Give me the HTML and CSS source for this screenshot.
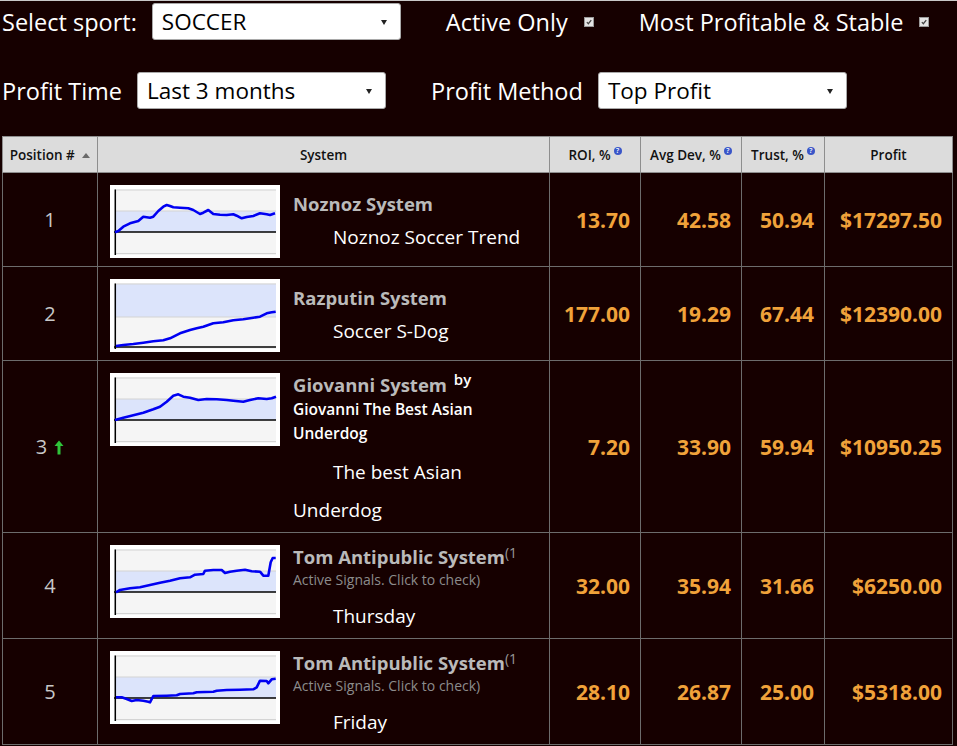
FILE: index.html
```html
<!DOCTYPE html>
<html lang="en">
<head>
  <meta charset="UTF-8">
  <title>Systems Ranking</title>
  <link rel="stylesheet" href="styles.css">
</head>
<body>
  <div class="filters">
    <div class="filter-row">
      <div class="filter-group">
        <span class="filter-label">Select sport:</span>
        <div class="select" style="width: 249px"><span>SOCCER</span></div>
      </div>
      <div class="filter-group">
        <span class="filter-label">Active Only</span>
        <span class="tick"><svg viewBox="0 0 10 10" width="10" height="10"><path d="M2.3 5.2 L4.2 7.2 L7.8 2.6" fill="none" stroke="#444" stroke-width="1.6"/></svg></span>
      </div>
      <div class="filter-group">
        <span class="filter-label">Most Profitable &amp; Stable</span>
        <span class="tick"><svg viewBox="0 0 10 10" width="10" height="10"><path d="M2.3 5.2 L4.2 7.2 L7.8 2.6" fill="none" stroke="#444" stroke-width="1.6"/></svg></span>
      </div>
    </div>
    <div class="filter-row">
      <div class="filter-group">
        <span class="filter-label">Profit Time</span>
        <div class="select" style="width: 249px"><span>Last 3 months</span></div>
      </div>
      <div class="filter-group">
        <span class="filter-label">Profit Method</span>
        <div class="select" style="width: 249px"><span>Top Profit</span></div>
      </div>
    </div>
  </div>

  <table class="rank-table">
    <colgroup>
      <col style="width: 95px">
      <col style="width: 452px">
      <col style="width: 91px">
      <col style="width: 101px">
      <col style="width: 83px">
      <col style="width: 128px">
    </colgroup>
    <thead>
      <tr>
        <th>Position # <span class="sort"></span></th>
        <th>System</th>
        <th>ROI, %<span class="help">?</span></th>
        <th>Avg Dev, %<span class="help">?</span></th>
        <th>Trust, %<span class="help">?</span></th>
        <th>Profit</th>
      </tr>
    </thead>
    <tbody>
      <tr>
        <td class="pos">1</td>
        <td class="system-cell">
          <div class="system">
            <div class="chart"></div>
            <div class="system-info">
              <div class="sys-name">Noznoz System</div>
              <div class="strategy">Noznoz Soccer Trend</div>
            </div>
          </div>
        </td>
        <td class="num">13.70</td>
        <td class="num">42.58</td>
        <td class="num">50.94</td>
        <td class="num">$17297.50</td>
      </tr>
      <tr>
        <td class="pos">2</td>
        <td class="system-cell">
          <div class="system">
            <div class="chart"></div>
            <div class="system-info">
              <div class="sys-name">Razputin System</div>
              <div class="strategy">Soccer S-Dog</div>
            </div>
          </div>
        </td>
        <td class="num">177.00</td>
        <td class="num">19.29</td>
        <td class="num">67.44</td>
        <td class="num">$12390.00</td>
      </tr>
      <tr>
        <td class="pos">3<svg class="up" viewBox="0 0 10 15" width="10" height="15"><path d="M5 0.5 L9.5 6 L6.5 6 L6.5 14.5 L3.5 14.5 L3.5 6 L0.5 6 Z" fill="#2fc43a"/></svg></td>
        <td class="system-cell">
          <div class="system">
            <div class="chart"></div>
            <div class="system-info">
              <div class="sys-name">Giovanni System <sup class="by">by</sup></div>
              <div class="author">Giovanni The Best Asian Underdog</div>
              <div class="strategy">The best Asian Underdog</div>
            </div>
          </div>
        </td>
        <td class="num">7.20</td>
        <td class="num">33.90</td>
        <td class="num">59.94</td>
        <td class="num">$10950.25</td>
      </tr>
      <tr>
        <td class="pos">4</td>
        <td class="system-cell">
          <div class="system">
            <div class="chart"></div>
            <div class="system-info">
              <div class="sys-name">Tom Antipublic System<sup class="count">(1</sup></div>
              <div class="signals">Active Signals. Click to check)</div>
              <div class="strategy">Thursday</div>
            </div>
          </div>
        </td>
        <td class="num">32.00</td>
        <td class="num">35.94</td>
        <td class="num">31.66</td>
        <td class="num">$6250.00</td>
      </tr>
      <tr>
        <td class="pos">5</td>
        <td class="system-cell">
          <div class="system">
            <div class="chart"></div>
            <div class="system-info">
              <div class="sys-name">Tom Antipublic System<sup class="count">(1</sup></div>
              <div class="signals">Active Signals. Click to check)</div>
              <div class="strategy">Friday</div>
            </div>
          </div>
        </td>
        <td class="num">28.10</td>
        <td class="num">26.87</td>
        <td class="num">25.00</td>
        <td class="num">$5318.00</td>
      </tr>
    </tbody>
  </table>

  <script>
    document.addEventListener('DOMContentLoaded', function() {
      // Equity curves, one per row, in chart coordinates (170 x 73)
      const charts = [
        { grid: [5, 26, 68.5], band: [26, 47], zero: 47,
          points: [[5,47.3],[8.3,46],[13.3,41.7],[20,38.3],[28.3,36],[33.3,31.7],[40,32.7],[43.3,31.7],[48.3,26],[53.3,21.7],[56.7,20],[60,21],[63.3,22.3],[70,22.7],[78.3,23.3],[83.3,25],[90,29],[93.3,27.7],[98.3,25],[103.3,29],[110,29.7],[116.7,30],[123.3,29.3],[126.7,30.7],[131.7,33.3],[136.7,32],[143.3,31],[150,28.3],[156.7,29.3],[160,30],[165,28.3]] },
        { grid: [5, 38], band: [5, 38], zero: 68,
          points: [[6,67],[13.3,66],[23.3,65],[33.3,63.7],[43.3,62.3],[53.3,61.3],[60,59.3],[70,54.3],[80,51],[86.7,49.3],[93.3,47.7],[103.3,44.3],[113.3,43.3],[123.3,41.3],[133.3,40.3],[143.3,38.7],[150,37.7],[156.7,34.3],[161.7,33.3],[165.7,32.7]] },
        { grid: [5, 26, 68.5], band: [26, 47], zero: 47,
          points: [[5,47],[13.3,44.7],[23.3,42.3],[33.3,39.7],[43.3,36.3],[50,33.7],[56.7,28.7],[63.3,22.7],[68.3,21.3],[73.3,23.7],[80,24.7],[88.3,27],[96.7,26],[106.7,26.3],[116.7,27],[123.3,27.7],[133.3,28.7],[140,27],[148.3,25.3],[156.7,26],[161.7,25.3],[166,23.7]] },
        { grid: [5, 26, 68.5], band: [26, 47], zero: 47,
          points: [[6,47.3],[10,45],[20,43.3],[30,42.3],[40,40],[50,37.7],[60,35.7],[70,33.3],[80,32.3],[85,29.7],[93.3,29],[95,25.7],[103.3,25],[111.7,25],[115,28],[120,26.7],[126.7,25.7],[135,24.7],[141.7,26.3],[150,26.7],[153.3,30.7],[158.3,30.7],[160.7,17.3],[162.7,13],[165.7,13]] },
        { grid: [5, 26, 68.5], band: [26, 47], zero: 47,
          points: [[6,46.3],[11.7,46.3],[16.7,48],[21.7,50],[26.7,49],[33.3,49.7],[38.3,50.7],[40,51.3],[43.3,45],[56.7,44.7],[66.7,44.3],[70,43],[83.3,42.3],[86.7,41.3],[103.3,40.7],[106.7,39.7],[116.7,39],[130,38.7],[143.3,38.3],[146.7,36.3],[150,29.7],[156.7,30],[158.3,32.3],[161.7,28.3],[165.7,27.7]] }
      ];

      function drawChart(c) {
        let svg = '<svg viewBox="0 0 170 73" width="170" height="73">';
        svg += '<rect width="170" height="73" fill="#fff"/>';
        svg += '<rect x="4" y="4" width="162" height="66" fill="#f5f5f5"/>';
        svg += `<rect x="5" y="${c.band[0]}" width="161" height="${c.band[1] - c.band[0]}" fill="#dce4fb"/>`;
        c.grid.forEach(y => {
          svg += `<line x1="5" x2="166" y1="${y}" y2="${y}" stroke="#d4d4d4" stroke-width="1.2"/>`;
        });
        svg += `<line x1="4" x2="166" y1="${c.zero}" y2="${c.zero}" stroke="#000" stroke-width="1.3"/>`;
        svg += '<line x1="5.3" x2="5.3" y1="4.5" y2="70" stroke="#000" stroke-width="1.5"/>';
        const pts = c.points.map(p => p.join(',')).join(' ');
        svg += `<polyline points="${pts}" fill="none" stroke="#0000f2" stroke-width="2.6" stroke-linejoin="round"/>`;
        return svg + '</svg>';
      }

      document.querySelectorAll('.chart').forEach((el, i) => {
        el.innerHTML = drawChart(charts[i]);
      });
    });
  </script>
</body>
</html>
```

FILE: styles.css
```css
:root {
  --page-bg: #160000;
  --line-color: #6c6c6c;
  --head-bg: #dcdcdc;
  --accent: #f0a23a;
  --muted: #bababa;
}

body {
  margin: 0;
  border-top: 1px solid #c8c8c8;
  background-color: var(--page-bg);
  color: #fff;
  font-family: 'Open Sans', 'DejaVu Sans', sans-serif;
}

/* Filter bar */
.filters {
  padding: 2px 2px 0;
}

.filter-row {
  display: flex;
  align-items: center;
  height: 37px;
}

.filter-row + .filter-row {
  margin-top: 32px;
}

.filter-group {
  display: flex;
  align-items: center;
}

.filter-group + .filter-group {
  margin-left: 45px;
}

.filter-label {
  font-size: 23.5px;
  margin-right: 15px;
}

.select {
  position: relative;
  box-sizing: border-box;
  height: 37px;
  display: flex;
  align-items: center;
  padding-left: 9px;
  background: #fff;
  border: 1px solid #a9a9a9;
  border-radius: 3px;
  color: #000;
  font-size: 22.5px;
}

.select::after {
  content: '';
  position: absolute;
  right: 13px;
  top: 16px;
  border-left: 3px solid transparent;
  border-right: 3px solid transparent;
  border-top: 5px solid #222;
}

.tick {
  display: inline-block;
  box-sizing: border-box;
  width: 10px;
  height: 10px;
  margin-left: 1px;
  background: #e4e4e4;
  border: 1px solid #9a9a9a;
  line-height: 0;
}

.tick svg {
  width: 8px;
  height: 8px;
}

/* Ranking table */
.rank-table {
  margin: 27px 0 0 2px;
  width: 950px;
  table-layout: fixed;
  border-collapse: collapse;
}

.rank-table th {
  height: 35px;
  padding: 0;
  background-color: var(--head-bg);
  border: 1px solid #8e8e8e;
  color: #111;
  font-size: 13.5px;
  font-weight: 600;
  text-align: center;
}

.sort {
  display: inline-block;
  margin-left: 4px;
  border-left: 4px solid transparent;
  border-right: 4px solid transparent;
  border-bottom: 5px solid #6a6a6a;
  vertical-align: 2px;
}

.help {
  display: inline-block;
  width: 8px;
  height: 8px;
  margin-left: 3px;
  border-radius: 50%;
  background: #3a56c8;
  color: #fff;
  font-size: 7px;
  line-height: 8px;
  text-align: center;
  vertical-align: 7px;
}

.rank-table td {
  border: 1px solid var(--line-color);
  vertical-align: middle;
}

.pos {
  text-align: center;
  color: #c8c8c8;
  font-size: 20px;
}

.up {
  margin-left: 7px;
  vertical-align: -1px;
}

.num {
  padding-right: 10px;
  text-align: right;
  color: var(--accent);
  font-size: 21px;
  font-weight: 700;
}

.rank-table td.system-cell {
  padding: 12px 8px 3px 12px;
  vertical-align: top;
}

.system {
  display: flex;
  gap: 13px;
}

.chart {
  flex: none;
  width: 170px;
  height: 73px;
  margin-bottom: 5px;
  line-height: 0;
}

.system-info {
  flex: 1;
  min-height: 73px;
  display: flex;
  flex-direction: column;
  justify-content: center;
}

.sys-name {
  color: var(--muted);
  font-size: 18.5px;
  font-weight: bold;
  line-height: 24px;
}

.sys-name sup {
  line-height: 0;
}

.by {
  margin-left: 2px;
  color: #fff;
  font-size: 15px;
  font-weight: 600;
  vertical-align: 7px;
}

.count {
  color: #999;
  font-size: 14px;
  font-weight: normal;
  vertical-align: 6px;
}

.author {
  padding-bottom: 6px;
  color: #fff;
  font-size: 15.5px;
  font-weight: 600;
  line-height: 24px;
}

.signals {
  padding-bottom: 5px;
  color: #8c8c8c;
  font-size: 14px;
  line-height: 21px;
}

.strategy {
  margin-top: 2px;
  color: #fff;
  font-size: 19px;
  line-height: 38px;
  text-indent: 40px;
}
```
